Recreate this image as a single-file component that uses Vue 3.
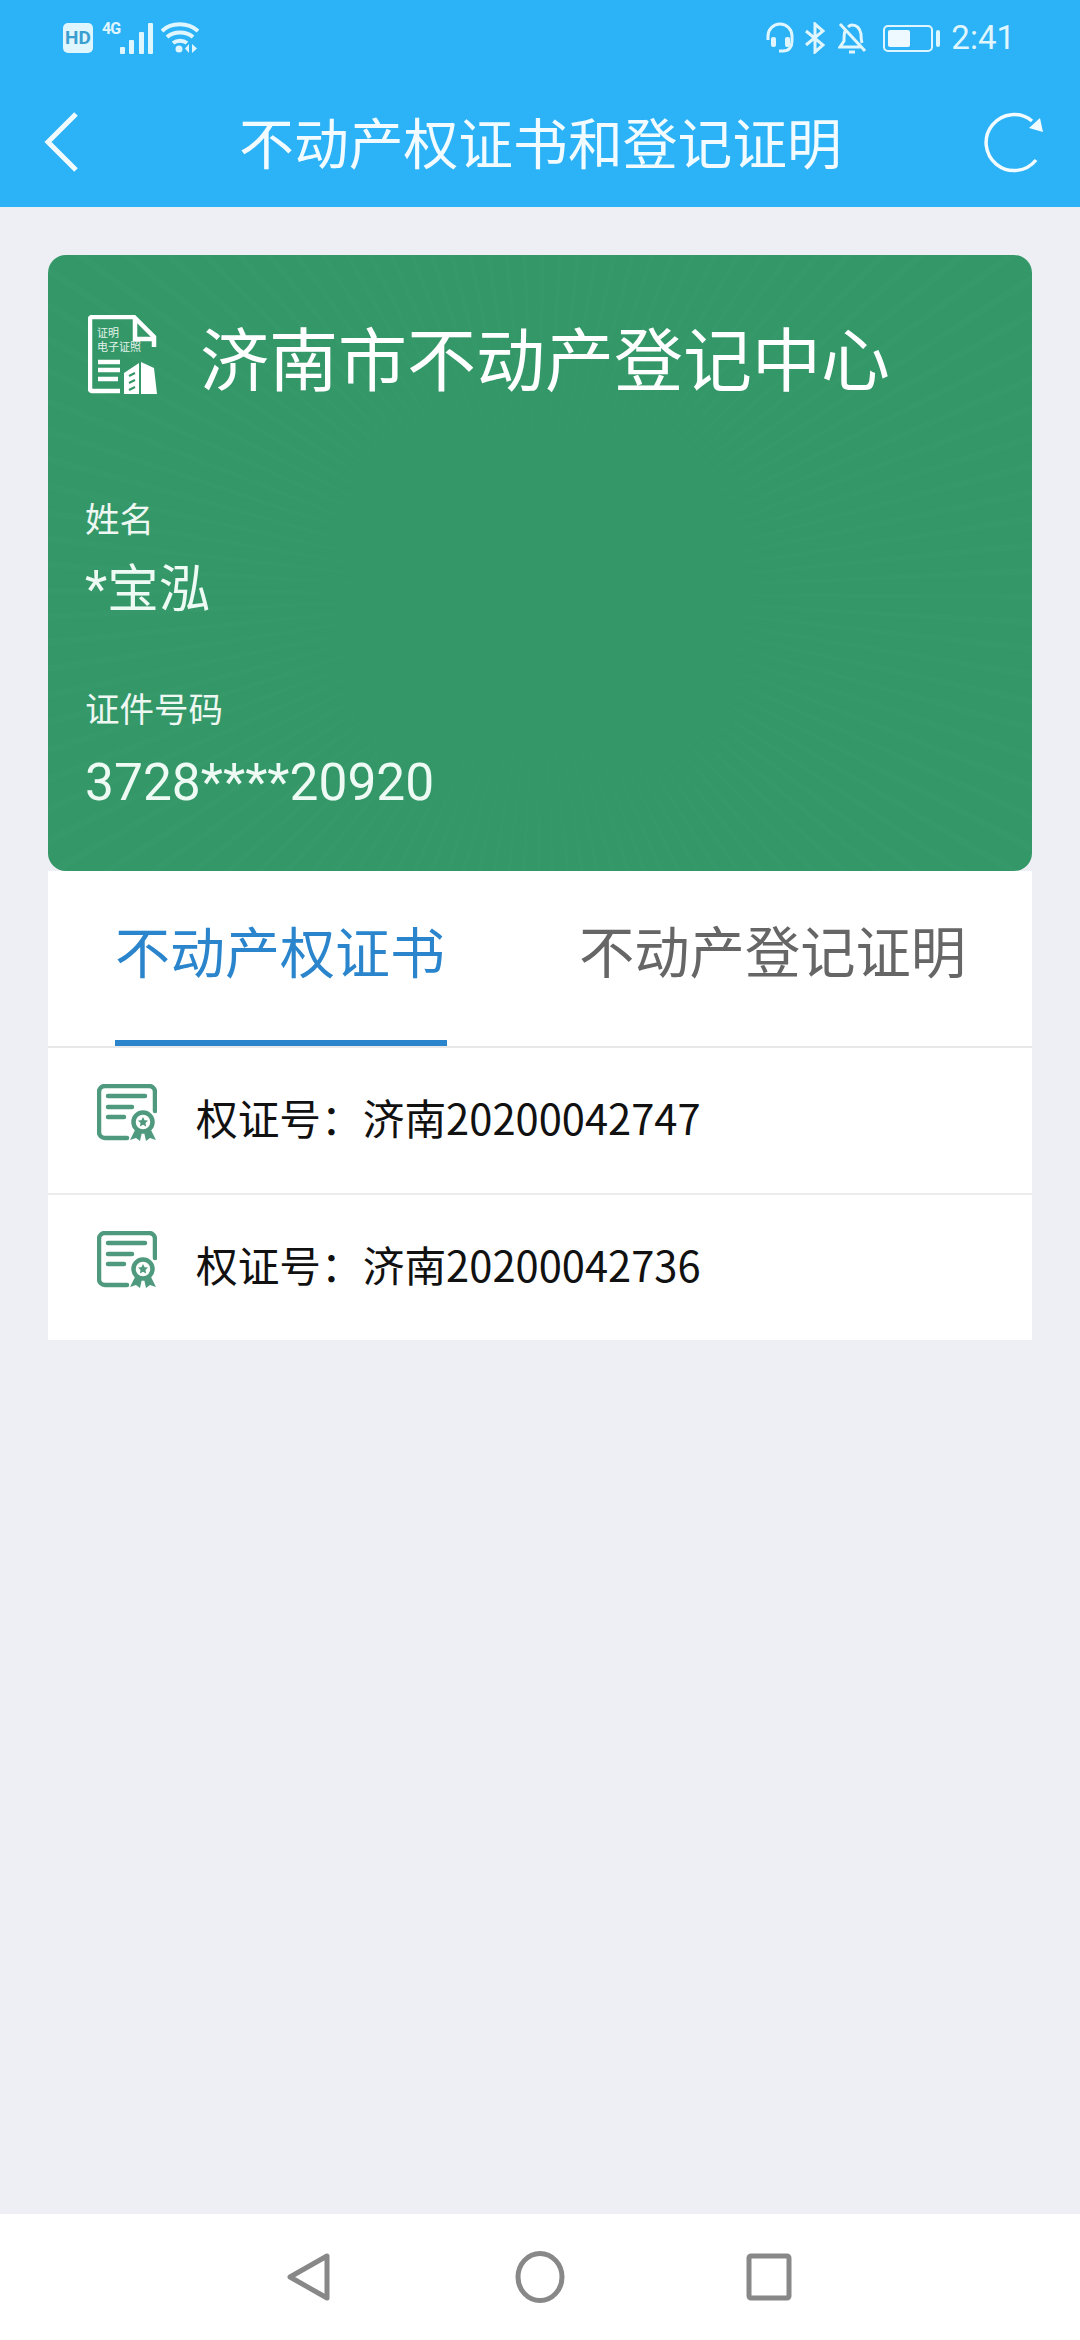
<template>
  <div class="page">
    <header class="top">
      <div class="status">
        <div class="status-left">
          <span class="hd">HD</span>
          <span class="net">4G</span>
          <svg width="33" height="31" viewBox="0 0 33 31" class="signal">
            <rect x="0" y="24" width="5" height="7" rx="1" />
            <rect x="9" y="17" width="5" height="14" rx="1" />
            <rect x="19" y="9" width="5" height="22" rx="1" />
            <rect x="28" y="0" width="5" height="31" rx="1" />
          </svg>
          <svg width="38" height="32" viewBox="0 0 38 32" class="wifi">
            <path d="M1 9C10 0 27 0 37 9M6 15c7-6 19-6 26 0M12 21c4-3 10-3 14 0" />
            <circle cx="18" cy="27" r="3.500" />
            <path class="solid" d="M28 22v9l-4-4.500zM31 22v9l5-4.500z" />
          </svg>
        </div>
        <div class="status-right">
          <svg width="30" height="32" viewBox="0 0 30 32" class="ico headset">
            <path d="M3 18V14a12 12 0 0 1 24 0v5c0 6-3 10-9 10h-4" />
            <rect class="solid" x="6" y="15" width="5" height="10" rx="2" />
            <rect class="solid" x="20" y="15" width="5" height="10" rx="2" />
          </svg>
          <svg width="20" height="32" viewBox="0 0 20 32" class="ico bluetooth">
            <path d="M1 9l17 14-8 7V2l8 7L1 23" />
          </svg>
          <svg width="28" height="32" viewBox="0 0 28 32" class="ico bell">
            <path d="M2 2l25 27M7 9c-1 3-1 6-1 10l-4 6h20M10 5c2-2 3-2 4-2 5 0 8 4 9 9 0 4 0 6 1 9" />
            <path d="M11 30h6" />
          </svg>
          <div class="battery">
            <span class="battery-fill"></span>
          </div>
          <span class="battery-tip"></span>
          <span class="clock">2:41</span>
        </div>
      </div>
      <div class="bar">
        <svg width="40" height="64" viewBox="0 0 40 64" class="back">
          <path d="M34 4L6 32l28 28" />
        </svg>
        <h1 class="title">不动产权证书和登记证明</h1>
        <svg width="64" height="66" viewBox="0 0 64 66" class="refresh">
          <path d="M52 51A28 28 0 1 1 48 12" />
          <path class="solid" d="M56 9l3 14-14-4z" />
        </svg>
      </div>
    </header>

    <main class="content">
      <section class="card">
        <div class="card-head">
          <svg width="72" height="82" viewBox="0 0 72 82" class="doc">
            <path d="M32 76H4a2 2 0 0 1-2-2V4a2 2 0 0 1 2-2h42l20 20v10" />
            <path d="M47 3v21h20" />
            <path d="M10 47h22M10 55h22M10 64h20" />
            <path class="solid" d="M36 79V58l15-10v31zM53 47l13 6 3 26H53z" />
            <path class="cut" d="M41 61l6-3M41 68l6-3M41 75l6-3" />
            <text class="tiny" x="9" y="22">证明</text>
            <text class="tiny" x="9" y="36">电子证照</text>
          </svg>
          <div class="org">济南市不动产登记中心</div>
        </div>
        <div class="field first">
          <div class="label">姓名</div>
          <div class="value">*宝泓</div>
        </div>
        <div class="field second">
          <div class="label">证件号码</div>
          <div class="value">3728****20920</div>
        </div>
      </section>

      <section class="panel">
        <div class="tabs">
          <div class="tab active">不动产权证书</div>
          <div class="tab">不动产登记证明</div>
        </div>
        <div v-for="item in items" :key="item" class="row">
          <svg width="60" height="58" viewBox="0 0 60 58" class="cert">
            <path d="M30 54H8a6 6 0 0 1-6-6V8a6 6 0 0 1 6-6h44a6 6 0 0 1 6 6v19" />
            <path d="M11 12h37M11 23h24M11 33h16" />
            <circle cx="46" cy="38" r="9.500" />
            <path class="star" d="M46 33l1.600 3.200 3.400.4-2.500 2.400.6 3.400-3.100-1.600-3.100 1.600.6-3.400-2.500-2.400 3.400-.4z" />
            <path class="star" d="M38 46l-5 10 6-2 4 3 2-9zM54 46l5 10-6-2-4 3-2-9z" />
          </svg>
          <span class="cert-text">权证号：济南{{ item }}</span>
        </div>
      </section>
    </main>

    <footer class="nav">
      <svg width="46" height="54" viewBox="0 0 46 54">
        <path d="M42 6v42L5 27z" />
      </svg>
      <svg width="50" height="54" viewBox="0 0 50 54">
        <ellipse cx="25" cy="27" rx="22" ry="23.500" />
      </svg>
      <svg width="46" height="48" viewBox="0 0 46 48">
        <rect x="3" y="3" width="40" height="42" rx="2" />
      </svg>
    </footer>
  </div>
</template>

<script setup>
const items = ["20200042747", "20200042736"];
</script>

<style>
html,
body {
  margin: 0;
  background: #eeeff4;
}
</style>

<style scoped>
.page {
  width: 1080px;
  height: 2340px;
  display: flex;
  flex-direction: column;
  background: #eeeff4;
  font-family: "Noto Sans CJK SC", "Noto Sans", sans-serif;
}

.top {
  height: 207px;
  background: #2cb2f6;
  color: #fff;
}

.status {
  height: 76px;
  padding: 22px 65px 0 63px;
  box-sizing: border-box;
  display: flex;
  justify-content: space-between;
  align-items: flex-start;
}

.status-left,
.status-right {
  display: flex;
  align-items: center;
}

.hd {
  width: 30px;
  height: 30px;
  border-radius: 5px;
  background: #e0f6ff;
  color: #3a9fd0;
  font: 700 19px/30px "Roboto", sans-serif;
  text-align: center;
}

.net {
  align-self: flex-start;
  margin-left: 9px;
  width: 18px;
  font: 700 16px/14px "Roboto", sans-serif;
  letter-spacing: -1px;
  color: #e0f6ff;
}

.signal {
  fill: #e0f6ff;
}

.wifi {
  margin-left: 8px;
  fill: #e0f6ff;
}

.wifi path {
  fill: none;
  stroke: #e0f6ff;
  stroke-width: 4;
}

.wifi .solid {
  fill: #e0f6ff;
  stroke: none;
}

.ico {
  fill: none;
  stroke: #e0f6ff;
  stroke-width: 3;
}

.ico .solid {
  fill: #e0f6ff;
  stroke: none;
}

.bluetooth {
  margin-left: 10px;
}

.bell {
  margin-left: 13px;
}

.battery {
  width: 50px;
  height: 27px;
  margin-left: 17px;
  border: 2px solid #e0f6ff;
  border-radius: 5px;
  padding: 3px;
  box-sizing: border-box;
  display: flex;
}

.battery-fill {
  width: 22px;
  background: #eef9ff;
  border-radius: 2px;
}

.battery-tip {
  width: 4px;
  height: 17px;
  margin-left: 3px;
  border-radius: 2px;
  background: #e0f6ff;
}

.clock {
  margin-left: 11px;
  font: 400 33px/32px "Roboto", sans-serif;
  color: #e0f6ff;
}

.bar {
  height: 131px;
  display: flex;
  align-items: center;
  justify-content: space-between;
  padding: 0 32px 0 42px;
  box-sizing: border-box;
}

.back {
  fill: none;
  stroke: #f2fbff;
  stroke-width: 5;
}

.title {
  margin: -4px 0 0 15px;
  font-size: 54.800px;
  font-weight: 400;
  line-height: 64px;
  color: #f2fbff;
}

.refresh {
  fill: none;
  stroke: #f2fbff;
  stroke-width: 3.500;
}

.refresh .solid {
  fill: #f2fbff;
  stroke: none;
}

.content {
  flex: 1;
  padding: 48px 48px 0;
}

.card {
  height: 616px;
  box-sizing: border-box;
  padding: 60px 37px 0;
  border-radius: 18px;
  color: #fff;
  background-color: #339768;
  background-image:
    radial-gradient(circle at 50% 55%, #339768 18%, rgba(51, 151, 104, 0) 48%),
    repeating-conic-gradient(from 0deg at 50% 55%, rgba(255, 255, 255, 0.014) 0deg 0.7deg, rgba(0, 0, 0, 0) 0.7deg 3deg);
}

.card-head {
  display: flex;
  align-items: center;
  height: 82px;
}

.doc {
  margin-left: 3px;
  fill: none;
  stroke: #fff;
  stroke-width: 4.500;
}

.doc .solid {
  fill: #fff;
  stroke: none;
}

.doc .cut {
  stroke: #339768;
  stroke-width: 2;
}

.doc .tiny {
  fill: #e4f3eb;
  stroke: none;
  font-size: 11px;
}

.org {
  margin-left: 40px;
  font-size: 69px;
  line-height: 82px;
}

.field.first {
  margin-top: 97px;
}

.field.second {
  margin-top: 64px;
}

.label {
  font-size: 34.500px;
  line-height: 46px;
  color: #eef7f2;
}

.value {
  margin-top: 20px;
  font-size: 51.500px;
  line-height: 60px;
  color: #eefaf4;
  font-family: "Roboto", "Noto Sans CJK SC", sans-serif;
}

.field.second .value {
  margin-top: 23px;
}

.panel {
  background: #fff;
}

.tabs {
  height: 177px;
  display: flex;
  border-bottom: 2px solid #e8e8e8;
  box-sizing: border-box;
}

.tab {
  font-size: 55.300px;
  line-height: 64px;
  padding-top: 46px;
  color: #666;
  height: 175px;
  box-sizing: border-box;
  white-space: nowrap;
}

.tab.active {
  margin-left: 67px;
  margin-right: 132px;
  font-size: 55px;
  color: #2a85cd;
  border-bottom: 6px solid #2a85cd;
  width: 332px;
}

.row {
  height: 147px;
  box-sizing: border-box;
  display: flex;
  align-items: center;
  padding: 0 0 8px 49px;
  border-bottom: 2px solid #ececec;
}

.row:last-child {
  height: 145px;
  border-bottom: 0;
}

.cert {
  fill: none;
  stroke: #4f9a7e;
  stroke-width: 4.500;
  stroke-linecap: round;
  margin-top: -8px;
}

.cert .star {
  fill: #4f9a7e;
  stroke: none;
}

.cert-text {
  margin-left: 39px;
  font-size: 41.700px;
  line-height: 56px;
  color: #111;
}

.nav {
  height: 126px;
  background: #fff;
  display: flex;
  align-items: center;
  padding-left: 285px;
  box-sizing: border-box;
}

.nav svg {
  fill: none;
  stroke: #888;
  stroke-width: 5;
  stroke-linejoin: round;
}

.nav svg:nth-child(2) {
  margin-left: 184px;
}

.nav svg:nth-child(3) {
  margin-left: 181px;
}
</style>
